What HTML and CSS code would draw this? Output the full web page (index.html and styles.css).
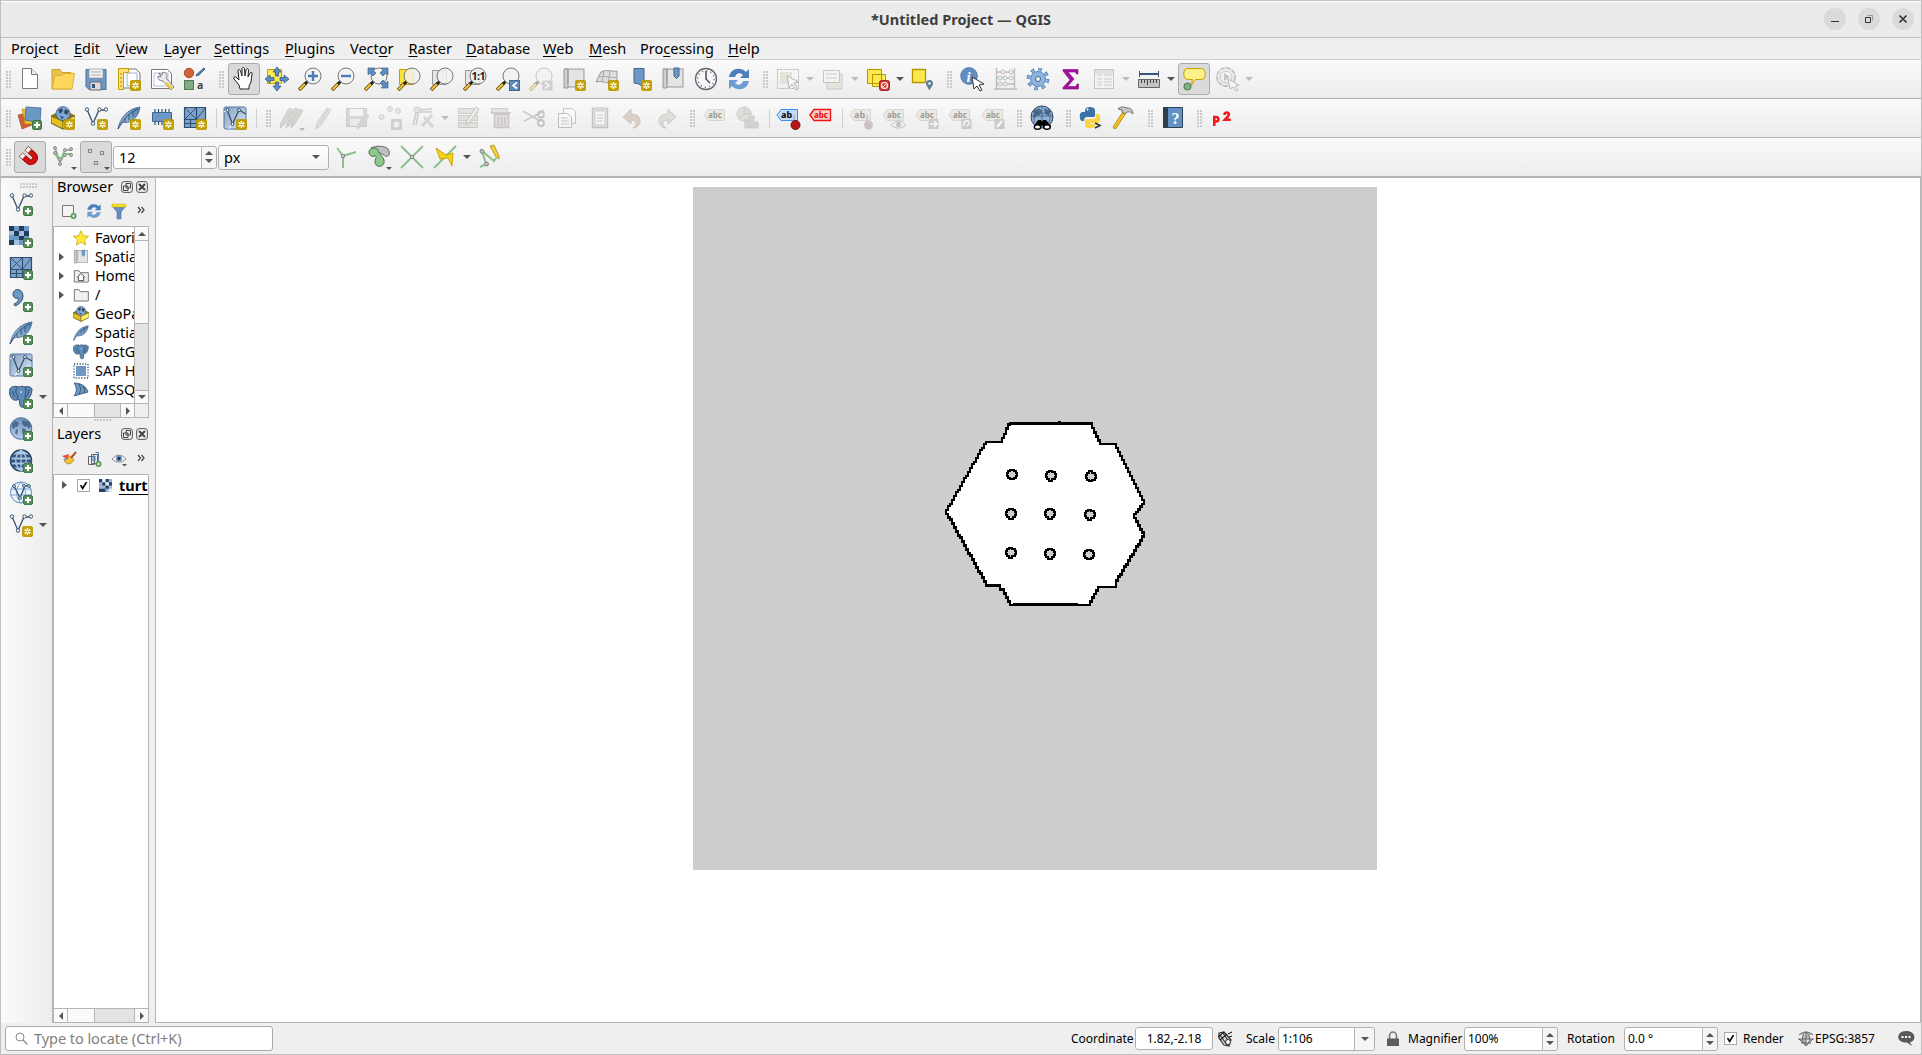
FILE: index.html
```html
<!DOCTYPE html>
<html lang="en">
<head>
<meta charset="utf-8">
<title>*Untitled Project — QGIS</title>
<link rel="stylesheet" href="styles.css">
</head>
<body>
<svg class="defs" width="0" height="0">
  <defs>
    <linearGradient id="blueball" x1="0" y1="0" x2="0" y2="1"><stop offset="0" stop-color="#6f93bf"/><stop offset="1" stop-color="#b5cdea"/></linearGradient>
    <linearGradient id="bluecard" x1="0" y1="0" x2="1" y2="1"><stop offset="0" stop-color="#7f9fc4"/><stop offset="1" stop-color="#dfe9f4"/></linearGradient>
    <linearGradient id="feather" x1="1" y1="0" x2="0" y2="1"><stop offset="0" stop-color="#4d7cb3"/><stop offset="1" stop-color="#b5cfea"/></linearGradient>
  </defs>
  <symbol id="b-new" viewBox="0 0 24 24"><rect x="13.500" y="13.500" width="10" height="10" rx="1" fill="#c4a000" stroke="#b79500" stroke-width=".8"/><path d="M18.500 15v7M15.500 16.700l6 3.600M21.500 16.700l-6 3.600" stroke="#fff" stroke-width="1.500"/><circle cx="18.500" cy="18.500" r="1" fill="#c4a000"/></symbol>
  <symbol id="b-add" viewBox="0 0 24 24"><rect x="14.500" y="14.500" width="9" height="9" rx="1.500" fill="#5a8c5a" stroke="#3f7a44"/><path d="M19 16v6M16 19h6" stroke="#fff" stroke-width="2"/></symbol>
  <symbol id="lens" viewBox="0 0 24 24"><path d="M1 23l6.500-6.500" stroke="#5a4a10" stroke-width="3.600"/><path d="M1.500 22.500l5.500-5.500" stroke="#f8c630" stroke-width="2"/><path d="M7 17l3-3" stroke="#222" stroke-width="3"/><circle cx="15" cy="9" r="8" fill="#f1f1ef" fill-opacity=".82" stroke="#777"/></symbol>
  <symbol id="vee" viewBox="0 0 24 24"><path d="M3 3.500l6 14 6-13.500h7" fill="none" stroke="#34506c" stroke-width="1.300"/><g fill="#fff" stroke="#34506c"><circle cx="3" cy="3.500" r="1.700"/><circle cx="9" cy="17.500" r="1.700"/><circle cx="15.500" cy="3.500" r="1.700"/><circle cx="22" cy="3.500" r="1.700"/></g></symbol>
  <symbol id="quill" viewBox="0 0 24 24"><path d="M1 23C3 12 10 3 23 1c-1 7-5 13-11 15-3 1-6 0-7 1z" fill="url(#feather)" stroke="#3c5f86" stroke-width=".8"/><path d="M1 23C5 14 12 7 21 3M8 12v4M12 8v6M16 5.500V11" fill="none" stroke="#34506c" stroke-width=".9"/></symbol>
  <symbol id="mesh" viewBox="0 0 24 24"><path d="M1 1.500h22v20H1z" fill="#7da3cd"/><path d="M1.500 1.500h21v20h-21zM1.500 13.500h21M13.500 1.500v20M7.500 13.500v8M1.500 17.500h12" fill="none" stroke="#2f4d6e" stroke-width="1.200"/><path d="M1.500 1.500l12 12M13.500 1.500l-12 12M22.500 1.500l-9 12" stroke="#2f4d6e" stroke-width=".9"/></symbol>
  <symbol id="globe" viewBox="0 0 24 24"><circle cx="12" cy="11.500" r="10.800" fill="url(#blueball)" stroke="#4f7099"/><path d="M3 7l3-3 3 1 1 2-2 3H6l-1 2-2-1zM7 12l2 1-1 5-2-2zM13 4l2-1 5 2 2 4-2 3-2-3-2 1-3-3zM13 11l3 1 2 3-2 4-2-1-1-3z" fill="#3f5b7a" opacity=".8"/></symbol>
  <symbol id="card" viewBox="0 0 24 24"><rect x="1" y="1" width="22" height="22" rx="1.500" fill="url(#bluecard)" stroke="#56779c"/><path d="M4.500 5l5 13 6-13M16 4l7 4" fill="none" stroke="#34506c" stroke-width="1.300"/><path d="M1 6l3-2M9 18l-3 5" stroke="#fff"/><circle cx="4.500" cy="4" r="1.500" fill="#fff" stroke="#34506c"/><circle cx="9.500" cy="18" r="1.500" fill="#fff" stroke="#34506c"/><circle cx="16" cy="4" r="1.500" fill="#fff" stroke="#34506c"/></symbol>
  <symbol id="box" viewBox="0 0 24 24"><path d="M0 10l12-6 12 6v7l-12 6L0 17z" fill="#e9c21a" stroke="#6b5a14" stroke-width=".9"/><path d="M0 10l12 5 12-5-12-6z" fill="#8a7518"/><circle cx="12" cy="7.500" r="7" fill="#7fa8d6" stroke="#3c5a7d" stroke-width=".7"/><path d="M7 4l4-2 1 3-3 3zM14 3l4 2-2 4-3-2zM9 10l4 1-2 2z" fill="#2f4862"/><path d="M0 10l12 5.500V23L0 17z" fill="#e5c11d" stroke="#6b5a14" stroke-width=".8"/><path d="M12 15.500L24 10v7l-12 6z" fill="#fdee6e" stroke="#6b5a14" stroke-width=".8"/></symbol>
  <symbol id="elephant" viewBox="0 0 24 24"><path d="M1 4c1-3 6-3 9-2 2-1 4-1 5 0 4-1 7 0 8 2 0 4-2 9-4 10l-3 1v5c0 3-5 3-5 0l-1-6-2 1c-4 1-6-2-7-5-1-3-1-4 0-6z" fill="#5f8cbb" stroke="#34506c"/><path d="M8 2c-2 4-1 7 1 9l-1 3M16 2c2 4 0 7 0 12M3 6c1 2 2 4 3 6M20 4c0 3-1 6-3 8" fill="none" stroke="#34506c"/><circle cx="12" cy="7" r=".8" fill="#fff"/></symbol>
  <symbol id="refresh" viewBox="0 0 24 24"><path d="M2 10C3 4 8 1 13 2c3 0 5 2 6 3l3-3v9h-9l3-3c-3-3-7-2-8 2z" fill="#4b80bd"/><path d="M22 14c-1 6-6 9-11 8-3 0-5-2-6-3l-3 3v-9h9l-3 3c3 3 7 2 8-2z" fill="#6b9cd2"/></symbol>
  <symbol id="tag" viewBox="0 0 24 24"><path d="M1 9l4-5.500h16.500v11H5z" fill="#d8d5c2" stroke="#a9a694"/><text x="5" y="12.300" font-size="8">abc</text></symbol>
  <symbol id="tagbadge" viewBox="0 0 24 24"><rect x="13.500" y="13" width="10" height="10" rx="1" fill="#8c8c8c"/></symbol>
  <symbol id="book" viewBox="0 0 24 24"><rect x="3" y="2" width="19" height="18" fill="#e4e4e4" stroke="#999"/><path d="M6 2v15M2 2h4v19H2z" fill="#cfcfcf" stroke="#999"/></symbol>
  <symbol id="folder" viewBox="0 0 24 24"><path d="M2 21V4h7l2 3h12v14z" fill="#f1f1ef" stroke="#777" stroke-width="1.500"/></symbol>
  <symbol id="float" viewBox="0 0 12 12"><rect x=".6" y=".6" width="10.800" height="10.800" rx="2.500" fill="none" stroke="#555"/><path d="M5 2.500h4.500V7H5zM2.500 5H7v4.500H2.500z" fill="#eee" stroke="#444"/></symbol>
  <symbol id="close" viewBox="0 0 12 12"><rect x=".6" y=".6" width="10.800" height="10.800" rx="2.500" fill="none" stroke="#555"/><path d="M3 3l6 6M9 3L3 9" stroke="#444" stroke-width="2"/></symbol>
  <symbol id="hole" viewBox="-24 -24 48 48"><path d="M-6-14h11v4h7v6h3v9h-3v6h-7v4h-11v-4h-6v-6h-3v-9h3v-6h6z" fill="#cdcdcd" stroke="#000" stroke-width="6"/></symbol>
</svg>

<div class="window">
  <header class="titlebar">
    <h1>*Untitled Project — QGIS</h1>
    <div class="wm">
      <svg viewBox="0 0 22 22"><path d="M7 13.500h8"/></svg>
      <svg viewBox="0 0 22 22"><path d="M9.500 7.500h5v5" stroke="#999"/><path d="M7.500 9.500h5v5h-5z"/></svg>
      <svg viewBox="0 0 22 22"><path d="M7.500 7.500l7 7M14.500 7.500l-7 7" stroke-width="1.700"/></svg>
    </div>
  </header>

  <nav class="menubar">
    <span class="m1">Pro<u>j</u>ect</span><span class="m2"><u>E</u>dit</span><span class="m3"><u>V</u>iew</span><span class="m4"><u>L</u>ayer</span><span class="m5"><u>S</u>ettings</span><span class="m6"><u>P</u>lugins</span><span class="m7">Vect<u>o</u>r</span><span class="m8"><u>R</u>aster</span><span class="m9"><u>D</u>atabase</span><span class="m10"><u>W</u>eb</span><span class="m11"><u>M</u>esh</span><span class="m12">Pro<u>c</u>essing</span><span class="m13"><u>H</u>elp</span>
  </nav>

  <div class="toolbar">
    <i class="grip"></i>
    <b class="t"><svg viewBox="0 0 24 24"><path d="M4.500 1.500h9l6 6v14h-15z" fill="#fff" stroke="#777"/><path d="M13.500 1.500v6h6" fill="#eee" stroke="#777"/></svg></b>
    <b class="t"><svg viewBox="0 0 24 24"><path d="M1 22V2.500h8l2 3h9V22z" fill="#e9c24a" stroke="#c9a12f"/><path d="M1 22L4 8.500h7l2-2h10.500L21 22z" fill="#fdd75a" stroke="#d9b23c"/></svg></b>
    <b class="t"><svg viewBox="0 0 24 24"><path d="M2 2.500h20v20H5l-3-3z" fill="#6d97c4" stroke="#4b6e96"/><path d="M5 2h14v9H5z" fill="#f2f2f0" stroke="#888" stroke-width=".6"/><path d="M7 5h10M7 8h10" stroke="#aaa"/><path d="M6 15h11v8H6z" fill="#dcdcdc" stroke="#667"/><path d="M8 17h3v4H8z" fill="#35557d"/></svg></b>
    <b class="t"><svg viewBox="0 0 24 24"><path d="M5 2h14l4 4v15H5z" fill="#fff" stroke="#777"/><path d="M10 6h10v13H10z" fill="#fff" stroke="#9eb0cf"/><path d="M1.500 1.500h10v4h-5v17h-5z" fill="#fce17a" stroke="#c4a000"/><path d="M3 7h2M3 11h2M3 15h2M3 19h2" stroke="#a88700"/><use href="#b-new"/></svg></b>
    <b class="t"><svg viewBox="0 0 24 24"><path d="M1.500 2.500h16l4 4v15h-20z" fill="#fff" stroke="#777"/><path d="M4 6h14v13H4z" fill="#fff" stroke="#b3bfdc"/><path d="M9 6l3 2 1-3c4 1 5 4 3 6l8 9-3 3-8-9c-3 0-6-2-5-5l3 1z" fill="#eaeaea" stroke="#666" stroke-width=".8"/><path d="M17 15l6 6-2 2-6-6z" fill="#f0c93c"/></svg></b>
    <b class="t"><svg viewBox="0 0 24 24"><circle cx="6" cy="6" r="4.700" fill="#cf6236" stroke="#a9471f"/><path d="M13 9l3-1 6-6-1-1-7 6z" fill="#5d8abf" stroke="#42658e"/><rect x="1.500" y="13.500" width="9" height="9" fill="#83ab83" stroke="#527a52"/><text x="14" y="22" font-size="10.500" fill="#444">a</text></svg></b>
    <i class="grip"></i>
    <b class="t on"><svg viewBox="0 0 24 24"><path d="M8 22l-1-4-5-6c-1-2 1-3 3-1l2 2L6 4c0-2 2-2 2.500 0L10 9V2c0-2 2.500-2 2.500 0L13 9l1-6c.5-2 2.500-1.500 2.500 0L16 10l2-4c1-1.500 2.500-.5 2 1l-1 8-2 4v3z" fill="#fff" stroke="#222"/></svg></b>
    <b class="t"><svg viewBox="0 0 24 24"><path d="M2.500 2.500h14v14h-14z" fill="#fce94f" stroke="#c4a000"/><path d="M12 0l4 5h-2.500v4h-3V5H8zM12 24l4-5h-2.500v-4h-3v4H8zM0 12l5-4v2.500h4v3H5V16zM24 12l-5-4v2.500h-4v3h4V16z" fill="#5d8fc7" stroke="#355a85" stroke-width=".8"/></svg></b>
    <b class="t"><svg viewBox="0 0 24 24"><use href="#lens"/><path d="M15 4v10M10 9h10" stroke="#4b7cb3" stroke-width="2.400"/></svg></b>
    <b class="t"><svg viewBox="0 0 24 24"><use href="#lens"/><path d="M10 9h10" stroke="#4b7cb3" stroke-width="2.400"/></svg></b>
    <b class="t"><svg viewBox="0 0 24 24"><use href="#lens"/><path d="M4 1h7L9 3l3 3-3 3-3-3-2 2zM24 1h-7l2 2-3 3 3 3 3-3 2 2zM24 21h-7l2-2-3-3 3-3 3 3 2-2z" fill="#5d8abf" stroke="#42658e" stroke-width=".7"/></svg></b>
    <b class="t"><svg viewBox="0 0 24 24"><path d="M2.500 2.500h14v15h-14z" fill="#fce33c" stroke="#c4a000"/><use href="#lens"/></svg></b>
    <b class="t"><svg viewBox="0 0 24 24"><path d="M2.500 3.500h14v14h-14z" fill="#e6e6e6" stroke="#999"/><use href="#lens"/></svg></b>
    <b class="t"><svg viewBox="0 0 24 24"><path d="M2.500 3.500h14v14h-14z" fill="#e6e6e6" stroke="#999"/><use href="#lens"/><text x="8.500" y="13" font-size="10.500" class="tight" fill="#222">1:1</text></svg></b>
    <b class="t"><svg viewBox="0 0 24 24"><use href="#lens"/><rect x="13.500" y="13.500" width="10" height="10" fill="#5d8abf" stroke="#42658e"/><path d="M21 15.500l-4 3 4 3" fill="none" stroke="#fff" stroke-width="1.600"/></svg></b>
    <b class="t off"><svg viewBox="0 0 24 24"><use href="#lens"/><rect x="13.500" y="13.500" width="10" height="10" fill="#999"/><path d="M16 15.500l4 3-4 3" fill="none" stroke="#fff" stroke-width="1.600"/></svg></b>
    <b class="t"><svg viewBox="0 0 24 24"><use href="#book"/><use href="#b-new"/></svg></b>
    <b class="t"><svg viewBox="0 0 24 24"><path d="M1 15L6 5c6-3 10 0 16-1v13C15 18 8 13 1 15z" fill="#dedede" stroke="#999"/><path d="M4 10c6-2 12 2 18 0M9 4L7 14M15 4l-2 12" fill="none" stroke="#aaa"/><use href="#b-new"/></svg></b>
    <b class="t"><svg viewBox="0 0 24 24"><path d="M6 1.500h10V21l-5-4-5-1z" fill="#6d97c4" stroke="#42658e"/><use href="#b-new"/></svg></b>
    <b class="t"><svg viewBox="0 0 24 24"><use href="#book"/><path d="M13 1h5v8l-2.500 2.500L13 9z" fill="#6d97c4" stroke="#42658e"/></svg></b>
    <b class="t"><svg viewBox="0 0 24 24"><circle cx="12" cy="12" r="10.500" fill="#f7f7f7" stroke="#666" stroke-width="1.300"/><circle cx="12" cy="12" r="8.300" fill="none" stroke="#5d8abf" stroke-width="1.500" stroke-dasharray="1.300 3.040"/><path d="M12 4v8l4 4" fill="none" stroke="#444" stroke-width="1.400"/></svg></b>
    <b class="t"><svg viewBox="0 0 24 24"><use href="#refresh"/></svg></b>
    <i class="grip"></i>
    <b class="t off"><svg viewBox="0 0 24 24"><path d="M1.500 2.500h21v19h-21z" fill="none" stroke="#555" stroke-dasharray="2 1"/><path d="M4 5h12v12H4z" fill="#cfc9ac"/><path d="M11 9l12 6-5 1 4 6-2 1-4-6-3 4z" fill="#fff" stroke="#444"/></svg></b><em class="d off"></em>
    <b class="t off"><svg viewBox="0 0 24 24"><path d="M6 7h15v15H6z" fill="#d5d1ba" stroke="#888"/><path d="M2.500 3.500h16v12h-16z" fill="#f4f4f4" stroke="#777"/><path d="M5 7h11M5 11h11" stroke="#888"/></svg></b><em class="d off"></em>
    <b class="t"><svg viewBox="0 0 24 24"><path d="M1.500 2.500h14v14h-14zM6.500 7.500h13v12h-13z" fill="#fce94f" stroke="#b79500"/><rect x="13.500" y="13.500" width="10" height="10" rx="2" fill="#d43c3c" stroke="#a82020"/><circle cx="18.500" cy="18.500" r="3" fill="none" stroke="#fff" stroke-width="1.200"/><path d="M16.500 20.500l4-4" stroke="#fff"/></svg></b><em class="d"></em>
    <b class="t"><svg viewBox="0 0 24 24"><path d="M1.500 2.500h13v13h-13z" fill="#fce94f" stroke="#b79500" stroke-width="1.300"/><path d="M18.500 23.500c-2-4-3.500-5-3.500-7a3.500 3.500 0 0 1 7 0c0 2-1.500 3-3.500 7z" fill="#5c7f99"/><circle cx="18.500" cy="16.500" r="1.200" fill="#fff"/></svg></b>
    <i class="grip"></i>
    <b class="t"><svg viewBox="0 0 24 24"><circle cx="9" cy="9" r="8.400" fill="#5f8dc2" stroke="#42658e" stroke-width=".6"/><text x="6.500" y="14.500" font-size="15" font-style="italic" class="serif" fill="#fff">i</text><path d="M12 10l12 7-5 1 3 5-2 1-3-5-3 3z" fill="#fff" stroke="#333"/></svg></b>
    <b class="t off"><svg viewBox="0 0 24 24"><path d="M3.500 1v21M21.500 1v21M1 22h23M3 5h18M3 11h18M3 17h18" stroke="#666" stroke-width="1.400"/><g fill="#eee" stroke="#845"><circle cx="10" cy="5" r="2"/><circle cx="18" cy="5" r="2"/></g><g fill="#eee" stroke="#575"><circle cx="7" cy="11" r="2"/><circle cx="12" cy="11" r="2"/><circle cx="18" cy="11" r="2"/><circle cx="7" cy="17" r="2"/><circle cx="12" cy="17" r="2"/></g></svg></b>
    <b class="t"><svg viewBox="0 0 24 24"><circle cx="12" cy="12" r="9" fill="none" stroke="#5079ab" stroke-width="4.600" stroke-dasharray="3.400 3.670"/><circle cx="12" cy="12" r="7.500" fill="#8db4e0" stroke="#5d8abf"/><circle cx="12" cy="12" r="9" fill="none" stroke="#8db4e0" stroke-width="3.400" stroke-dasharray="2 5.070" stroke-dashoffset="-.7"/><circle cx="12" cy="12" r="2.500" fill="#f3f3f3" stroke="#42658e"/></svg></b>
    <b class="t"><svg viewBox="0 0 24 24"><path d="M4 2.500h15V7h-1.500l-1-2H9l6 7-6.500 7.500H17l1-2.500h1.500v5H4v-1.500L11 13 4 4z" fill="#a3109f" stroke="#7d087a" stroke-width=".6"/></svg></b>
    <b class="t off"><svg viewBox="0 0 24 24"><path d="M2.500 2.500h19v19h-19z" fill="#f4f4f4" stroke="#777"/><path d="M3 4h18M5 8h5M12 8h8M5 12h5M12 12h8M5 15h5M12 15h8M5 18h5M12 18h8M2 6h20" stroke="#7f8b99"/></svg></b><em class="d off"></em>
    <b class="t"><svg viewBox="0 0 24 24"><path d="M2 7h20" stroke="#35557d" stroke-width="2"/><path d="M2.500 4v6M21.500 4v6" stroke="#35557d"/><path d="M1.500 12.500h21v8h-21z" fill="#c4c4c4" stroke="#666"/><path d="M4.500 13v3M7.500 13v3M10.500 13v5M13.500 13v3M16.500 13v3M19.500 13v3" stroke="#444"/></svg></b><em class="d"></em>
    <b class="t on"><svg viewBox="0 0 24 24"><path d="M5 1.500h14c5 0 5 11 0 11h-6L9 18l1-5.500H5c-5 0-5-11 0-11z" fill="#fcf08a" stroke="#c4a000" transform="translate(.5)"/><circle cx="5.500" cy="19.500" r="3.600" fill="#7fae7f" stroke="#4e7a4e"/></svg></b>
    <b class="t off"><svg viewBox="0 0 24 24"><circle cx="11" cy="10" r="9" fill="#eee" stroke="#777" stroke-width="2" stroke-dasharray="5 1"/><circle cx="11" cy="10" r="6" fill="none" stroke="#777"/><path d="M9 6l6 4-6 4z" fill="#777"/><path d="M13 12l11 6-4 1 3 4-2 1-3-4-3 2z" fill="#fff" stroke="#555"/></svg></b><em class="d off"></em>
  </div>

  <div class="toolbar">
    <i class="grip"></i>
    <b class="t"><svg viewBox="0 0 24 24"><path d="M0 9l9-2 5 12-10 4z" fill="#cd5f31" stroke="#99401a" stroke-width=".6"/><path d="M4 3l12 1v14H7z" fill="#edc22b" stroke="#a98913" stroke-width=".6"/><path d="M8 1l15 1-1 15-15-3z" fill="#6d97c4" stroke="#42658e" stroke-width=".8"/><use href="#b-add"/></svg></b>
    <b class="t"><svg viewBox="0 0 24 24"><use href="#box"/><use href="#b-new"/></svg></b>
    <b class="t"><svg viewBox="0 0 24 24"><use href="#vee"/><use href="#b-new"/></svg></b>
    <b class="t"><svg viewBox="0 0 24 24"><use href="#quill"/><use href="#b-new"/></svg></b>
    <b class="t"><svg viewBox="0 0 24 24"><path d="M5 3v16M8.500 3v16M12 3v16M15.500 3v16M19 3v16" stroke="#34506c" stroke-width="1.200"/><path d="M2.500 6.500h19v9h-19z" fill="#6d97c4" stroke="#42658e"/><use href="#b-new"/></svg></b>
    <b class="t"><svg viewBox="0 0 24 24"><use href="#mesh"/><use href="#b-new"/></svg></b>
    <i class="sep"></i>
    <b class="t"><svg viewBox="0 0 24 24"><use href="#card"/><use href="#b-new"/></svg></b>
    <i class="sep"></i><i class="grip"></i>
    <b class="t off menu"><svg viewBox="0 0 24 24"><path d="M1 22L2 17 10 2l4 2-9 15zM7 22l1-5L16 2l4 2-9 15zM12 22l1-5 8-14 3 2-9 14z" fill="#aaa393" stroke="#888"/></svg></b>
    <b class="t off"><svg viewBox="0 0 24 24"><path d="M4 23l1-6L15 2l4 2L9 19z" fill="#cfcaaf" stroke="#888"/><path d="M7 18L16 4" stroke="#888"/></svg></b>
    <b class="t off"><svg viewBox="0 0 24 24"><path d="M1.500 2.500h20v18h-20z" fill="#aaa" stroke="#888"/><path d="M5 3h13v7H5z" fill="#f4f4f4"/><path d="M5 13h10v7H5z" fill="#ddd"/><path d="M12 23l2-6 7-9 3 2-7 10z" fill="#b89f95" stroke="#999"/></svg></b>
    <b class="t off"><svg viewBox="0 0 24 24"><g fill="#ccc" stroke="#999"><circle cx="3.500" cy="11" r="2.500"/><circle cx="12" cy="3" r="2.500"/><circle cx="20" cy="5" r="2.500"/></g><rect x="13" y="13" width="11" height="11" rx="1" fill="#999"/><path d="M18.500 15v7M15.500 16.700l6 3.600M21.500 16.700l-6 3.600" stroke="#fff" stroke-width="1.500"/></svg></b>
    <b class="t off"><svg viewBox="0 0 24 24"><path d="M2 19L6 4l15-1M8 4L5 19M6 6h15" fill="none" stroke="#888" stroke-width="1.400"/><circle cx="6" cy="4" r="3" fill="#ccc" stroke="#888"/><path d="M11 20l10-11M13 11l9 10" stroke="#b0a99a" stroke-width="3"/></svg></b><em class="d off"></em>
    <b class="t off"><svg viewBox="0 0 24 24"><path d="M2.500 2.500h19v5h-19zM2.500 9.500h19v5h-19zM2.500 16.500h19v5h-19z" fill="#c9c5b3" stroke="#888"/><path d="M10 19l1-5L20 1l3 2-9 13z" fill="#ddd" stroke="#777"/></svg></b>
    <b class="t off"><svg viewBox="0 0 24 24"><path d="M2.500 2.500h16v5h-16z" fill="#ccc6c2" stroke="#988"/><path d="M5.500 8.500h14v13h-14zM3 7h19" fill="#d0b9b9" stroke="#877" stroke-width="1.500"/><path d="M9 11v9M12.500 11v9M16 11v9" stroke="#877" stroke-width="1.500"/></svg></b>
    <b class="t off"><svg viewBox="0 0 24 24"><path d="M1 5l17 10M2 15l15-7 5-4" stroke="#888" stroke-width="1.800"/><circle cx="19" cy="8.500" r="3" fill="none" stroke="#777" stroke-width="1.800"/><circle cx="19" cy="17" r="3" fill="none" stroke="#777" stroke-width="1.800"/></svg></b>
    <b class="t off"><svg viewBox="0 0 24 24"><path d="M8.500 2.500h9l3 3v12h-12z" fill="#fff" stroke="#777"/><path d="M3.500 7.500h9l4 4v10h-13z" fill="#fff" stroke="#666"/><path d="M6 12h7M6 15h8M6 18h8" stroke="#777"/></svg></b>
    <b class="t off"><svg viewBox="0 0 24 24"><path d="M4.500 2.500h15v19h-15z" fill="#ccc" stroke="#777" stroke-width="1.500"/><path d="M7 5h10v14H7z" fill="#fff" stroke="#888"/><path d="M8.500 1h7v4h-7z" fill="#aaa"/><path d="M9 9h6M9 12h6M9 15h5" stroke="#777"/></svg></b>
    <b class="t off"><svg viewBox="0 0 24 24"><path d="M10 3v5c7 0 9 3 9 8-1 4-4 6-7 6 4-2 5-8-2-8v4L2 11z" fill="#b3937f" stroke="#8c7463"/></svg></b>
    <b class="t off"><svg viewBox="0 0 24 24"><path d="M14 3v5c-7 0-9 3-9 8 1 4 4 6 7 6-4-2-5-8 2-8v4l8-7z" fill="#b4bcae" stroke="#7e8a78"/></svg></b>
    <i class="grip"></i>
    <b class="t off"><svg viewBox="0 0 24 24"><use href="#tag"/></svg></b>
    <b class="t off"><svg viewBox="0 0 24 24"><circle cx="8" cy="8" r="7" fill="#b6c1ac" stroke="#888"/><path d="M8 8V1a7 7 0 0 1 7 7zM8 8l-5 5" fill="#aab" stroke="#888"/><path d="M9 14h4v8H9zM14 10h4v12h-4zM19 16h3v6h-3z" fill="#a9a09a" stroke="#888"/></svg></b>
    <i class="sep"></i>
    <b class="t"><svg viewBox="0 0 24 24"><path d="M1 9l4-5.500h16.500v11H5z" fill="#c2dcfb" stroke="#3d8fe6"/><text x="5" y="12.300" font-size="9">ab</text><path d="M18 9v10" stroke="#bbb" stroke-width="2"/><circle cx="19.500" cy="19" r="4.500" fill="#b31818" stroke="#7a1010"/></svg></b>
    <b class="t"><svg viewBox="0 0 24 24"><path d="M1 9l4-5.500h16.500v11H5z" fill="#fbd0d0" stroke="#f01414" stroke-width="1.400"/><text x="5" y="12.300" font-size="8" fill="#e00">abc</text></svg></b>
    <i class="sep"></i>
    <b class="t off"><svg viewBox="0 0 24 24"><path d="M1 9l4-5.500h16.500v11H5z" fill="#d8d5c2" stroke="#a9a694"/><text x="5" y="12.300" font-size="9">ab</text><path d="M18 9v10" stroke="#999" stroke-width="2"/><circle cx="19.500" cy="19" r="4.500" fill="#967474"/></svg></b>
    <b class="t off"><svg viewBox="0 0 24 24"><use href="#tag"/><path d="M9 19c4-5 11-5 15 0-4 4-11 4-15 0z" fill="#eee" stroke="#777"/><circle cx="16.500" cy="18.500" r="2.500" fill="#777"/></svg></b>
    <b class="t off"><svg viewBox="0 0 24 24"><use href="#tag"/><use href="#tagbadge"/><path d="M15 18h6M19 15l3 3-3 3" fill="none" stroke="#fff" stroke-width="1.600"/></svg></b>
    <b class="t off"><svg viewBox="0 0 24 24"><use href="#tag"/><use href="#tagbadge"/><path d="M16 20c-2-6 6-7 5-2-1 2-3 2-3 2" fill="none" stroke="#fff" stroke-width="1.600"/></svg></b>
    <b class="t off"><svg viewBox="0 0 24 24"><use href="#tag"/><use href="#tagbadge"/><path d="M16 21l5-6" stroke="#fff" stroke-width="2.400"/></svg></b>
    <i class="grip"></i>
    <b class="t"><svg viewBox="0 0 24 24"><circle cx="12" cy="11" r="11" fill="#8fb2d8" stroke="#2d445e"/><path d="M4 5l5-3 3 3-2 4-4 1-2 3zM14 2l6 3-1 5-4-2z" fill="#4b6a8c"/><path d="M1 10h22M12 0v15M3 5c5 3 13 3 18 0M6 2c-3 6-3 12 0 16M18 2c3 6 3 12 0 16" fill="none" stroke="#35506e" stroke-width=".7"/><path d="M4 20l4-6h3l1 2 1-2h3l5 6-1 3h-6l-2-4-2 4H5z"/><ellipse cx="7.500" cy="21" rx="3.200" ry="2.300" fill="#fff" stroke="#000" stroke-width="1.400"/><ellipse cx="17" cy="21" rx="3.200" ry="2.300" fill="#fff" stroke="#000" stroke-width="1.400"/></svg></b>
    <i class="grip"></i>
    <b class="t"><svg viewBox="0 0 24 24"><path d="M6 6V4c0-4 10-4 10 0v5c0 2-1 2-3 2H8c-2 0-3 1-3 4H3c-3 0-3-9 0-9h8z" fill="#3b73a8"/><path d="M16 8h3c3 0 3 9 0 9h-8v1h5v2c0 3-10 3-10 0v-5c0-2 1-2 3-2h5c2 0 3-1 3-3z" fill="#fbd343"/><circle cx="8.500" cy="3.500" r="1" fill="#fff"/><path d="M16 17l5 2.500-5 2.500" fill="none" stroke="#333" stroke-width="1.500"/></svg></b>
    <b class="t"><svg viewBox="0 0 24 24"><path d="M3 21L12 7" stroke="#9b7a09" stroke-width="4" stroke-linecap="round"/><path d="M3 21L12 7" stroke="#f4c21c" stroke-width="2.800" stroke-linecap="round"/><path d="M6 3c3-3 6-2 9-1 4 0 6 2 6 6-3-3-4-2-6-2l-2 2-3-2V4z" fill="#c5c7c9" stroke="#555" stroke-width=".8"/></svg></b>
    <i class="grip"></i>
    <b class="t"><svg viewBox="0 0 24 24"><path d="M2.500 1.500h19v20h-19z" fill="#6391c4" stroke="#2b3f55"/><path d="M2 1h5v21H2z" fill="#2b3f4f"/><text x="10.500" y="17.500" font-size="16" class="serif" fill="#fff">?</text></svg></b>
    <i class="grip"></i>
    <b class="t"><svg viewBox="0 0 24 24"><g fill="none" stroke="#ee1c1c" stroke-width="2.600"><path d="M4.300 20v-9h1.500c3.500 0 3.500 4.500 0 4.500H4.300"/><path d="M14.500 9c0-3.500 5-3 4.300-.2-.3 2-2.800 3.400-4 4.900h6"/></g></svg></b>
  </div>

  <div class="toolbar last">
    <i class="grip"></i>
    <b class="t on"><svg viewBox="0 0 24 24"><g transform="translate(1 1) rotate(-48 12 12) translate(.6 .6) scale(.95)"><path d="M5 2v10c0 9 14 9 14 0V2h-5v10c0 2.500-4 2.500-4 0V2z" fill="#d40f0f" stroke="#990a0a"/><path d="M5 2h5v4H5zM14 2h5v4h-5z" fill="#fff" stroke="#888" stroke-width=".6"/></g></svg></b>
    <b class="t menu"><svg viewBox="0 0 24 24"><path d="M4 3l5 14 5-12h7M4 8l5 9 5-8h7" fill="none" stroke="#8cc08c" stroke-width="2"/><g fill="#ccc" stroke="#888"><circle cx="4" cy="3" r="1.500"/><circle cx="4" cy="8" r="1.500"/><circle cx="9" cy="14" r="1.500"/><circle cx="9" cy="19" r="1.500"/><circle cx="14" cy="5" r="1.500"/><circle cx="14" cy="10" r="1.500"/><circle cx="20" cy="4" r="1.500"/><circle cx="20" cy="10" r="1.500"/></g></svg></b>
    <b class="t on menu"><svg viewBox="0 0 24 24"><g fill="#ddd" stroke="#888" stroke-width="1.200"><path d="M4.500 4.500h3v3h-3zM16.500 6.500h3v3h-3zM10.500 16.500h3v3h-3z"/></g></svg></b>
    <div class="spin big"><span>12</span><i></i></div>
    <div class="combo"><span>px</span><em class="d"></em></div>
    <b class="t"><svg viewBox="0 0 24 24"><path d="M9 23V11L3 3M9 11l13-4" fill="none" stroke="#8cc08c" stroke-width="2"/><path d="M7.500 9.500h3v3h-3z" fill="#ccc" stroke="#888"/></svg></b>
    <b class="t menu"><svg viewBox="0 0 24 24"><path d="M4 3c6-3 14-2 17 1 4 7-2 9-4 6L7 5z" fill="#c0c0c0" stroke="#666"/><path d="M2 8c-1-6 8-6 9-3 1 5 7 7 6 13-2 5-9 4-9-1s3-5 0-6c-3 1-5 0-6-3z" fill="#8cc98c" stroke="#4d6e4d"/></svg></b>
    <b class="t"><svg viewBox="0 0 24 24"><path d="M1 1l22 22M23 1L1 23" stroke="#8cc08c" stroke-width="2"/><path d="M10.500 10.500h3v3h-3z" fill="#ccc" stroke="#888"/></svg></b>
    <b class="t"><svg viewBox="0 0 24 24"><path d="M23 1L1 23" stroke="#8cc08c" stroke-width="2"/><path d="M3 3l10 7 7-2-1 13-4-8-8 1z" fill="#f6d312" stroke="#c49000" stroke-width=".8"/></svg></b><em class="d"></em>
    <b class="t"><svg viewBox="0 0 24 24"><path d="M2 22l6-3L4 6l12 10 2-3" fill="none" stroke="#8cc08c" stroke-width="2"/><path d="M12 1l4-1 5 11v3l-3-2z" fill="#f4cf38" stroke="#a58e28" stroke-width=".8"/><circle cx="4" cy="6.500" r="2" fill="#bbb" stroke="#888"/><circle cx="8.500" cy="19" r="2" fill="#bbb" stroke="#888"/></svg></b>
  </div>

  <main class="work">
    <aside class="sidebar">
      <i class="hgrip"></i>
      <b class="t"><svg viewBox="0 0 24 24"><use href="#vee"/><use href="#b-add"/></svg></b>
      <b class="t"><svg viewBox="0 0 24 24"><path d="M0 2h20v19H0z" fill="#6d97c4"/><path d="M0 2h5v5H0zM10 2h5v5h-5zM5 7h5v5H5zM15 7h5v5h-5zM10 12h5v4h-5zM0 16h5v5H0z" fill="#223c5e"/><path d="M10 7h5v5h-5zM0 7h5v4H0zM5 16h5v5H5z" fill="#a5c0de"/><use href="#b-add"/></svg></b>
      <b class="t"><svg viewBox="0 0 24 24"><use href="#mesh"/><use href="#b-add"/></svg></b>
      <b class="t"><svg viewBox="0 0 24 24"><path d="M4 6c0-4 5-6 8-3 4 4 2 12-6 15l-1-2c4-2 5-4 4-6-3 1-5-1-5-4z" fill="#6d97c4" stroke="#34506c"/><use href="#b-add"/></svg></b>
      <b class="t"><svg viewBox="0 0 24 24"><use href="#quill"/><use href="#b-add"/></svg></b>
      <b class="t"><svg viewBox="0 0 24 24"><use href="#card"/><use href="#b-add"/></svg></b>
      <b class="t"><svg viewBox="0 0 24 24"><use href="#elephant"/><use href="#b-add"/></svg><em class="d"></em></b>
      <b class="t"><svg viewBox="0 0 24 24"><use href="#globe"/><use href="#b-add"/></svg></b>
      <b class="t"><svg viewBox="0 0 24 24"><circle cx="12" cy="11.500" r="10.500" fill="#a9c6e6" stroke="#223c5e" stroke-width="1.500"/><path d="M3 7h18M1 12h22M3 17h18" stroke="#35557d" stroke-width="3"/><path d="M12 1v21M12 1c-7 6-7 15 0 21M12 1c7 6 7 15 0 21" fill="none" stroke="#a9c6e6" stroke-width="1.300"/><use href="#b-add"/></svg></b>
      <b class="t"><svg viewBox="0 0 24 24"><circle cx="12" cy="11.500" r="10.500" fill="#eaf2fb" stroke="#5d8abf"/><path d="M2 8h20M1 14h22M12 1c-6 6-6 15 0 21M12 1c6 6 6 15 0 21" fill="none" stroke="#7fa6d4"/><path d="M5 5l6 12 5-12h4" fill="none" stroke="#34506c" stroke-width="1.300"/><g fill="#fff" stroke="#34506c"><circle cx="5" cy="5" r="1.400"/><circle cx="11" cy="17" r="1.400"/><circle cx="15" cy="5" r="1.400"/><circle cx="20" cy="5" r="1.400"/></g><use href="#b-add"/></svg></b>
      <b class="t"><svg viewBox="0 0 24 24"><use href="#vee"/><use href="#b-new"/></svg><em class="d"></em></b>
    </aside>

    <div class="docks">
      <section class="dock browser">
        <h2><span>Browser</span><svg viewBox="0 0 12 12"><use href="#float"/></svg><svg viewBox="0 0 12 12"><use href="#close"/></svg></h2>
        <div class="tools">
          <svg viewBox="0 0 16 16"><path d="M1.500 2.500h11v11h-11z" fill="#f4f4f0" stroke="#777"/><circle cx="12.500" cy="13" r="3" fill="#5a9a5a"/><path d="M11 13h3M12.500 11.500v3" stroke="#fff" stroke-width=".8"/></svg>
          <svg viewBox="0 0 24 24"><use href="#refresh"/></svg>
          <svg viewBox="0 0 16 16"><path d="M1 3h14L10 9v7H6V9z" fill="#6391c4" stroke="#42658e" stroke-width=".5"/><path d="M1 1h14v3H1z" fill="#f9de2e" stroke="#c4a000" stroke-width=".5"/></svg>
          <svg class="more" viewBox="0 0 8 8"><path d="M1 1l2.500 3L1 7M4.500 1L7 4 4.500 7" fill="none" stroke="#444" stroke-width="1.200"/></svg>
        </div>
        <div class="tree">
          <ul>
            <li><a></a><svg viewBox="0 0 16 16"><path d="M8 .8l2.200 4.900 5.300.6-4 3.500 1.200 5.200L8 12.300 3.300 15l1.200-5.200-4-3.500 5.300-.6z" fill="#fcea3c" stroke="#c9a800" stroke-width=".8"/></svg><span class="fav">Favorites</span></li>
            <li><a class="x"></a><svg viewBox="0 0 24 24"><use href="#book"/><path d="M13 1h5v8l-2.500 2.500L13 9z" fill="#6d97c4"/></svg>Spatial Bookmarks</li>
            <li><a class="x"></a><svg viewBox="0 0 24 24"><use href="#folder"/><path d="M6 14l6-6 6 6M8 13v6h8v-6" fill="#fff" stroke="#444" stroke-width="1.500"/></svg>Home</li>
            <li><a class="x"></a><svg viewBox="0 0 24 24"><use href="#folder"/></svg>/</li>
            <li><a></a><svg viewBox="0 0 24 24"><use href="#box"/></svg>GeoPackage</li>
            <li><a></a><svg viewBox="0 0 24 24"><use href="#quill"/></svg>SpatiaLite</li>
            <li><a></a><svg viewBox="0 0 24 24"><use href="#elephant"/></svg>PostGIS</li>
            <li><a></a><svg viewBox="0 0 16 16"><path d="M3 3h10v10H3z" fill="#6d97c4"/><path d="M1 1h14v14H1z" fill="none" stroke="#34506c" stroke-width="1.300" stroke-dasharray="1.200 1.600"/></svg>SAP HANA</li>
            <li><a></a><svg viewBox="0 0 16 16"><path d="M1 1c7 0 12 3 14 9L1 14c3-4 3-9 0-13z" fill="#6d97c4" stroke="#42658e"/><path d="M6 2c2 4 2 7 0 10M10 4c2 3 2 5 1 7" fill="none" stroke="#34506c"/></svg>MSSQL</li>
            <li><a></a><svg viewBox="0 0 24 24"><use href="#globe"/></svg></li>
          </ul>
          <div class="vbar"><i class="up"></i><i class="thumb"></i><i class="groove"></i><i class="down"></i></div>
        </div>
        <div class="hbar"><i class="lt"></i><i class="thumb"></i><i class="groove"></i><i class="rt"></i><i class="corner"></i></div>
      </section>
      <i class="split"></i>
      <section class="dock layers">
        <h2><span>Layers</span><svg viewBox="0 0 12 12"><use href="#float"/></svg><svg viewBox="0 0 12 12"><use href="#close"/></svg></h2>
        <div class="tools">
          <svg viewBox="0 0 16 16"><path d="M1 5l7-2-1 6z" fill="#e84c3d"/><path d="M2 8l5-1 2 5z" fill="#5d8abf"/><path d="M3 10l7-5 3 4c-3 5-7 5-10 1z" fill="#efc33a" stroke="#a47320" stroke-width=".6"/><path d="M10 7l5-6" stroke="#b5541f" stroke-width="2"/></svg>
          <svg viewBox="0 0 16 16"><path d="M2.500 5.500h6v8h-6zM5.500 3.500h6v9h-6z" fill="#eee" stroke="#666"/><path d="M9.500 1.500h3V10M7 5h2v5H7z" fill="none" stroke="#4b7cb3"/><circle cx="12.500" cy="13" r="3" fill="#5a9a5a"/><path d="M11 13h3M12.500 11.500v3" stroke="#fff" stroke-width=".8"/></svg>
          <svg viewBox="0 0 16 16"><path d="M1 8c4-5 10-5 14 0-4 4-10 4-14 0z" fill="#f4f4f4" stroke="#888"/><circle cx="8" cy="7.500" r="3" fill="#5d8abf"/><circle cx="8" cy="7.500" r="1.300" fill="#222"/><path d="M11 13h5l-2.500 2.500z" fill="#555"/></svg>
          <svg class="more" viewBox="0 0 8 8"><path d="M1 1l2.500 3L1 7M4.500 1L7 4 4.500 7" fill="none" stroke="#444" stroke-width="1.200"/></svg>
        </div>
        <div class="tree">
          <div class="layer"><a class="x"></a><i class="check"><svg viewBox="0 0 13 13"><path d="M3 6l2.500 4L10 2.500" fill="none" stroke="#000" stroke-width="2"/></svg></i><svg class="ras" viewBox="0 0 12 12"><path d="M0 0h12v12H0z" fill="#9db8d6"/><path d="M0 0h3v3H0zM6 0h3v3H6zM3 3h3v3H3zM9 3h3v3H9zM6 6h3v3H6zM0 9h3v3H0zM3 9h3v3H3z" fill="#27405f"/><path d="M3 0h3v3H3zM6 3h3v3H6zM9 9h3v3H9z" fill="#e3ebf4"/></svg><strong>turtle</strong></div>
        </div>
        <div class="hbar"><i class="lt"></i><i class="thumb"></i><i class="groove wide"></i><i class="rt"></i></div>
      </section>
    </div>
    <i class="vsplit"></i>

    <div class="canvas">
      <svg class="raster" viewBox="0 0 684 683" shape-rendering="crispEdges">
        <path d="M0 0h684v683H0z" fill="#cdcdcd"/>
        <g transform="translate(237 223) scale(.33333)">
          <path d="M48 312v-12h6v-12h6v-6h6v-12h6v-12h6v-12h6v-6h6v-12h6v-12h6v-12h6v-6h6v-12h6v-12h6v-12h6v-6h6v-12h6v-12h6v-12h6v-6h6v-12h6V96H216V84H222V72H228V56H234V44H240V41H486V54H492V68H498V80H504V92H510V102H558v12h6v12h6v12h6v12h6v12h6v12h6v12h6v12h6v12h6v12h6v12h6v12h6v12h6V270H642V282H636V290H630V298H624V306H618V312H612V324H618V334H624V346H630V358H636V368H642V380H636v12h-6v12h-6v6h-6v12h-6v12h-6v6h-6v12h-6v12h-6v6h-6v12h-6v12h-6v6h-6v12h-6V531H504V542H498V552H492V562H486V574H480V585H240V574H234V562H228V550H222V538H210V526H168v-12h-6v-12h-6v-12h-6v-6h-6v-12h-6v-12h-6v-12h-6v-12h-6v-6h-6v-12h-6v-12h-6v-12h-6v-12h-6v-6h-6v-12h-6v-12h-6v-12h-6v-12h-6v-6h-6V312z" fill="#fff" stroke="#000" stroke-width="8"/>
          <path d="M384 38h10M406 36v6M420 36v6M441 36v6M248 583H443M504 531h46" stroke="#000" stroke-width="8"/>
          <use href="#hole" x="222" y="169" width="48" height="48"/><use href="#hole" x="338" y="173" width="48" height="48"/><use href="#hole" x="458" y="174" width="48" height="48"/>
          <use href="#hole" x="219" y="287" width="48" height="48"/><use href="#hole" x="337" y="287" width="48" height="48"/><use href="#hole" x="455" y="290" width="48" height="48"/>
          <use href="#hole" x="218" y="404" width="48" height="48"/><use href="#hole" x="336" y="407" width="48" height="48"/><use href="#hole" x="453" y="409" width="48" height="48"/>
        </g>
      </svg>
    </div>
  </main>

  <footer class="status">
    <div class="locator"><svg viewBox="0 0 13 13"><circle cx="5" cy="5" r="4" fill="none" stroke="#888"/><path d="M8 8l4.500 4.500" stroke="#888" stroke-width="1.300"/></svg><span>Type to locate (Ctrl+K)</span></div>
    <label class="s1">Coordinate</label>
    <div class="field"><span>1.82,-2.18</span></div>
    <svg class="mouse" viewBox="0 0 16 16"><path d="M2 2l5-1 7 8-2 6-5-1-5-7z" fill="#ddd" stroke="#333" stroke-width="1.200"/><path d="M1 6l6-5M3 9l7-6M6 2l6 9M3 4l7 10M11 3l4-2M12 6l3-1" stroke="#222" stroke-width="1.100"/><circle cx="11" cy="11" r="2.500" fill="#fff" stroke="#333"/></svg>
    <label class="s2">Scale</label>
    <div class="spin scale"><span>1:106</span><i class="dd"></i></div>
    <svg class="lock" viewBox="0 0 12 16"><path d="M2.500 8V5a3.500 4 0 0 1 7 0v3" fill="none" stroke="#777" stroke-width="1.600"/><path d="M0 7.500h12V15H0z" fill="#5c5c5c"/></svg>
    <label class="s3">Magnifier</label>
    <div class="spin mag"><span>100%</span><i></i></div>
    <label class="s4">Rotation</label>
    <div class="spin rot"><span>0.0 °</span><i></i></div>
    <i class="check"><svg viewBox="0 0 13 13"><path d="M3 6l2.500 4L10 2.500" fill="none" stroke="#000" stroke-width="2"/></svg></i>
    <label class="s5">Render</label>
    <svg class="crs" viewBox="0 0 16 16"><path d="M1 4c4-4 10-4 14 0M0 8h16M3 12h10M8 1v14M8 1C3 5 3 10 8 15M8 1c5 4 5 9 0 14M1 8l7 7 7-7" fill="#999" fill-opacity=".6" stroke="#666"/></svg>
    <label class="s6">EPSG:3857</label>
    <svg class="chat" viewBox="0 0 16 15"><path d="M8 0c11 0 10 11 4 11l2 4-5-3.500C-3 12-2 0 8 0z" fill="#5a5a5a"/><path d="M3.500 6h2M7 6h2M10.500 6h2" stroke="#fff" stroke-width="1.800"/></svg>
  </footer>
</div>
</body>
</html>
```
FILE: styles.css
```css
* { box-sizing: border-box; }
html, body { margin: 0; padding: 0; }
body {
  width: 1922px; height: 1055px; overflow: hidden;
  font: 14.5px/20px "Noto Sans", "Open Sans", sans-serif;
  color: #000; background: #efefef;
}
.defs { position: absolute; }
svg { display: block; flex: none; overflow: visible; }
svg text { font-family: "Noto Sans", sans-serif; font-weight: 700; stroke: none; }
svg text.serif { font-family: "Liberation Serif", serif; }
svg text.tight { letter-spacing: -0.5px; }
i, em, b, a { font-style: normal; flex: none; }
label, span { white-space: nowrap; }

.window {
  width: 1922px; height: 1055px; display: flex; flex-direction: column;
  border: 1px solid #bfbfbf; border-top-color: #c3c3c3;
}

/* title bar */
.titlebar {
  height: 37px; flex: none; position: relative; display: flex; align-items: center; justify-content: center;
  background: #ebebeb; border-top: 1px solid #fff; border-bottom: 1px solid #bdbdbd;
}
.titlebar h1 { margin: 0; padding-bottom: 2px; font-size: 14.5px; font-weight: 700; color: #3d3d3d; letter-spacing: 0.02px; }
.wm { position: absolute; right: 7px; top: 6px; display: flex; gap: 12px; }
.wm svg { width: 22px; height: 22px; border-radius: 50%; background: #dadada; fill: none; stroke: #333; }

/* menus */
.menubar { height: 22px; flex: none; display: flex; padding-left: 10px; border-bottom: 1px solid #d0d0d0; background: #efefef; }
.menubar span { flex: none; line-height: 20px; }
.menubar u { text-underline-offset: 2px; text-decoration-thickness: 1px; }
.m1 { width: 63px; } .m2 { width: 42px; } .m3 { width: 48px; } .m4 { width: 50px; } .m5 { width: 71px; }
.m6 { width: 65px; } .m7 { width: 58.5px; } .m8 { width: 57.500px; } .m9 { width: 77px; } .m10 { width: 46px; }
.m11 { width: 51px; } .m12 { width: 88px; }

/* toolbars */
.toolbar {
  height: 39px; flex: none; display: flex; align-items: center;
  background: linear-gradient(#fafafa, #ececec); border-bottom: 1px solid #b4b4b4;
}
.toolbar.last { height: 40px; border-bottom: 2px solid #b4b4b4; }
.grip { width: 16px; height: 17px; }
.grip::before {
  content: ""; display: block; width: 5px; height: 17px; margin-left: 7.5px;
  background: radial-gradient(circle at 1px 1px, #c9c9c9 .9px, transparent 1px) 0 0 / 3px 3px;
}
.toolbar > .grip:first-child { width: 12.5px; }
.toolbar > .grip:first-child::before { margin-left: 5px; }
.t { width: 33px; height: 32px; display: flex; align-items: center; justify-content: center; position: relative; font-weight: 400; }
.t svg { width: 24px; height: 24px; }
.t.on::before {
  content: ""; position: absolute; inset: 0 .5px; z-index: 0; border: 1px solid #ababab; border-radius: 3px; background: #dadada;
}
.t.on svg { position: relative; }
.t.off svg { opacity: .37; }
.t.menu::after {
  content: ""; position: absolute; right: 3px; bottom: 3px; border: 3px solid transparent; border-top-color: #555; border-bottom: 0;
}
.t.menu.off::after { opacity: .35; }
.d { width: 12px; display: flex; justify-content: flex-start; padding-left: 1.5px; }
.d::before { content: ""; border: 4px solid transparent; border-top-color: #555; border-bottom: 0; }
.d.off::before { opacity: .35; }
.sep { width: 7px; height: 19px; border-left: 1px solid #cfcfcf; margin-left: 4px; margin-right: -4px; }

/* fields */
.spin, .combo, .field {
  display: flex; flex: none; align-items: stretch; background: #fff; border: 1px solid #b0b0b0; border-radius: 3px;
}
.spin span { flex: 1; padding-left: 5px; }
.spin i {
  width: 15px; border-left: 1px solid #b6b6b6; background: #f6f6f6; border-radius: 0 3px 3px 0;
  display: flex; flex-direction: column; align-items: center; justify-content: center; gap: 4px;
}
.spin i::before { content: ""; border: 4px solid transparent; border-bottom-color: #555; border-top: 0; }
.spin i::after { content: ""; border: 4px solid transparent; border-top-color: #555; border-bottom: 0; }
.spin i.dd { width: 20px; }
.spin i.dd::before { display: none; }
.spin.big { width: 104px; height: 23px; line-height: 21px; margin-left: .5px; }
.combo { width: 111px; height: 25px; line-height: 23px; margin: 0 0 0 1px; background: linear-gradient(#fff, #f3f3f3); align-items: center; }
.combo span { flex: 1; padding-left: 5px; }
.combo .d { width: 16px; padding-left: 0; }

/* work area */
.work { flex: 1; min-height: 0; display: flex; }
.sidebar {
  width: 52px; flex: none; padding: 5px 0 0 3px; display: flex; flex-direction: column;
  background: linear-gradient(90deg, #fafafa, #ececec); border-right: 1px solid #b4b4b4;
}
.hgrip {
  width: 17px; height: 5px; margin: 0 0 0 16px;
  background: radial-gradient(circle at 1px 1px, #c9c9c9 .9px, transparent 1px) 0 0 / 3px 3px;
}
.sidebar .t { height: 32.15px; width: 34px; }
.sidebar .d { position: absolute; left: 33px; top: 14px; }

.docks { width: 96px; flex: none; display: flex; flex-direction: column; }
.dock { display: flex; flex-direction: column; width: 96px; flex: none; }
.browser { height: 240px; }
.layers { flex: 1; min-height: 0; }
.dock h2 { height: 19px; margin: 0; padding-left: 4px; font: inherit; display: flex; align-items: center; gap: 2.500px; flex: none; }
.dock h2 span { width: 61.5px; line-height: 17px; padding-bottom: 2px; }
.dock h2 svg { width: 12px; height: 12px; margin-bottom: 1px; }
.tools { flex: none; height: 29px; display: flex; align-items: center; padding: 0 0 1px 8px; gap: 9px; }
.tools svg { width: 16px; height: 16px; }
.tools svg.more { width: 8px; height: 8px; margin: 0 0 2px 1px; }
.tree { flex: 1; min-height: 0; display: flex; background: #fff; border: 1px solid #b4b4b4; overflow: hidden; }
.tree ul { list-style: none; margin: 0; padding: 1px 0 0 5px; width: 80px; height: 174px; overflow: hidden; flex: none; }
.tree li { height: 19.050px; line-height: 19px; display: flex; align-items: center; white-space: nowrap; }
.tree li svg { width: 16px; height: 16px; margin-right: 6.5px; }
.fav { letter-spacing: -0.35px; }
.tree a { width: 13.500px; }
.tree a.x::before { content: ""; display: block; width: 0; border: 4px solid transparent; border-left: 5px solid #555; border-right: 0; }
.vbar { width: 14px; flex: none; display: flex; flex-direction: column; border-left: 1px solid #b4b4b4; }
.vbar i, .hbar i { display: flex; align-items: center; justify-content: center; background: #fafafa; }
.vbar .up, .vbar .down { height: 13px; }
.vbar .thumb { height: 84px; border: solid #b4b4b4; border-width: 1px 0; }
.vbar .groove { flex: 1; background: #e3e3e3; }
.vbar .down { border-top: 1px solid #b4b4b4; }
.up::before { content: ""; border: 4px solid transparent; border-bottom-color: #555; border-top: 0; }
.down::before { content: ""; border: 4px solid transparent; border-top-color: #555; border-bottom: 0; }
.lt::before { content: ""; border: 4px solid transparent; border-right-color: #555; border-left: 0; }
.rt::before { content: ""; border: 4px solid transparent; border-left-color: #555; border-right: 0; }
.hbar { flex: none; height: 14px; display: flex; border: solid #b4b4b4; border-width: 0 1px 1px; }
.hbar .lt { width: 13px; }
.hbar .thumb { width: 28px; border: solid #b4b4b4; border-width: 0 1px; }
.hbar .groove { flex: 1; background: #e3e3e3; }
.hbar .rt { width: 14px; border-left: 1px solid #b4b4b4; }
.hbar .corner { width: 14px; border-left: 1px solid #b4b4b4; background: #efefef; }
.split { height: 7px; width: 17px; margin: -1px 0 0 41px; background: radial-gradient(circle at 1px 1px, #c9c9c9 .9px, transparent 1px) 0 2px / 3px 9px; }
.layers h2 { height: 21px; padding-bottom: 1px; }
.layers .tools { height: 29px; padding-bottom: 2px; }
.layer { display: flex; align-items: center; height: 20px; padding-left: 8px; white-space: nowrap; }
.layer a { width: 15px; }
.check { width: 13px; height: 13px; background: #fff; border: 1px solid #aaa; display: block; }
.check svg { width: 11px; height: 11px; }
.ras { width: 13px; height: 13px; margin: 0 7px 0 9px; }
.layer strong { text-decoration: underline; text-underline-offset: 3px; text-decoration-thickness: 1px; }
.vsplit { width: 6px; }
.canvas { flex: 1; background: #fff; border: 1px solid #b4b4b4; border-top: 0; padding: 9px 0 0 537px; }
.raster { width: 684px; height: 683px; }

/* status bar */
.status { height: 31px; flex: none; display: flex; align-items: center; padding-left: 4px; font-size: 12px; line-height: 21px; background: #efefef; }
.status label, .status > svg, .status .check { flex: none; }
.locator { width: 268px; height: 25px; display: flex; align-items: center; gap: 6px; padding-left: 9px; background: #fff; border: 1px solid #aaa; border-radius: 3px; color: #808080; font-size: 14.500px; }
.locator span { letter-spacing: -0.05px; }
.locator svg { width: 13px; height: 13px; }
.s1 { width: 64px; margin-left: 798px; }
.field { width: 78px; height: 23px; justify-content: center; }
.mouse { width: 16px; height: 16px; margin: 0 13px 0 4px; }
.s2 { width: 32px; }
.status .spin { height: 24px; }
.status .spin span { padding-left: 3px; }
.scale { width: 97px; }
.lock { width: 12px; height: 16px; margin: 0 9px 0 12px; }
.s3 { width: 56px; }
.mag, .rot { width: 94px; }
.s4 { width: 57px; margin-left: 9px; }
.rot + .check { margin: 0 6px; }
.s5 { width: 55px; }
.crs { width: 16px; height: 16px; margin-right: 1px; }
.s6 { width: 83px; }
.chat { width: 16px; height: 15px; }
```
